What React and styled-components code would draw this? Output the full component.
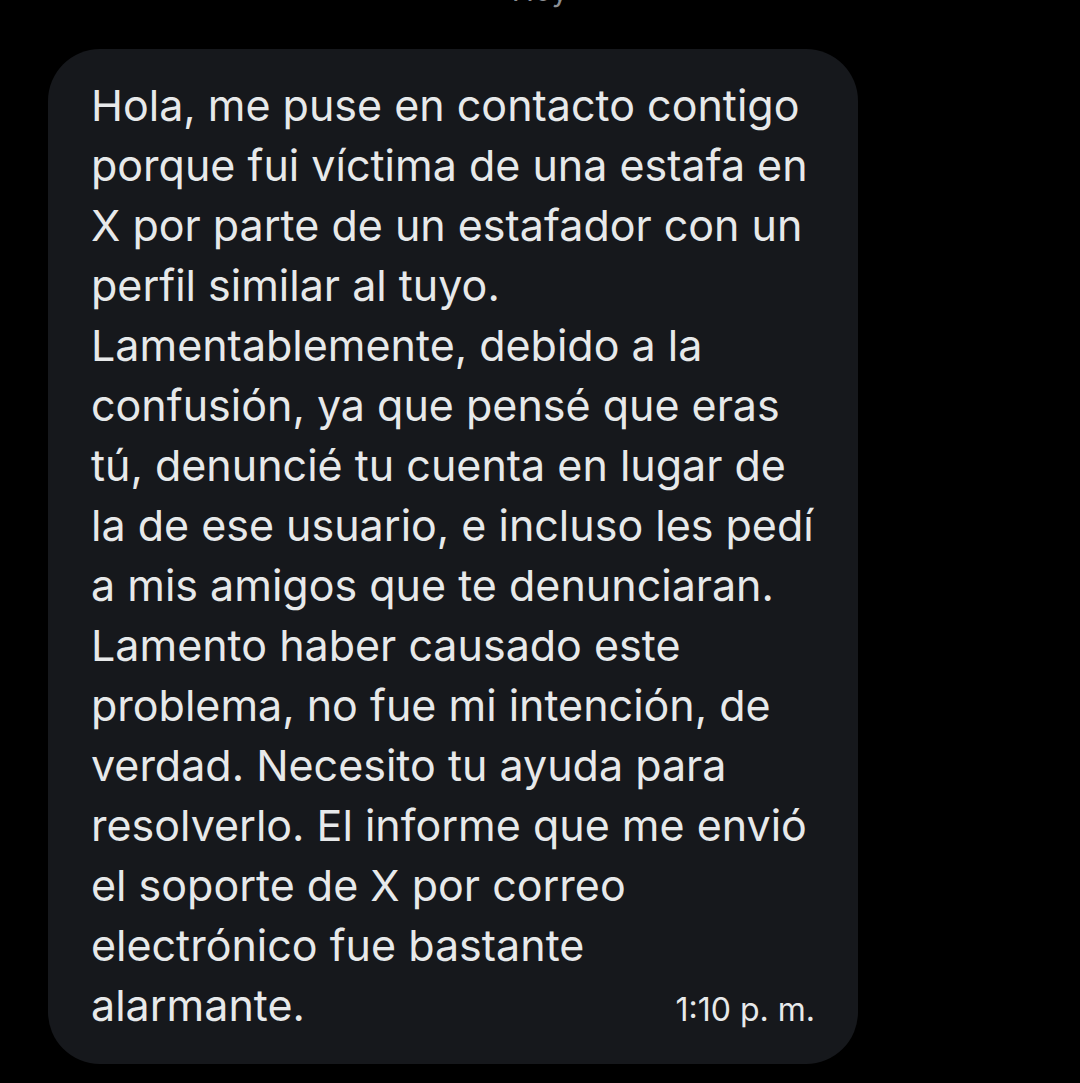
import React from 'react'
import styled, { createGlobalStyle } from 'styled-components'

const Global = createGlobalStyle`
  html, body {
    margin: 0;
    padding: 0;
    background: #000;
  }
  body {
    font-family: Inter, "Noto Sans", "Liberation Sans", sans-serif;
    -webkit-font-smoothing: antialiased;
  }
`

const Screen = styled.div`
  width: 1080px;
  height: 1083px;
  overflow: hidden;
  background: #000;
  display: flex;
  flex-direction: column;
  align-items: flex-start;
`

const DayLabel = styled.div`
  align-self: center;
  margin-top: -28px;
  height: 36px;
  color: #8b8f94;
  font-size: 30px;
  line-height: 36px;
`

const Bubble = styled.div`
  margin: 41px 0 0 48px;
  width: 810px;
  box-sizing: border-box;
  padding: 71px 43px 29px 43px;
  background: #16181c;
  border-radius: 52px;
  color: #e7e9ea;
`

const Line = styled.div`
  font-size: 43px;
  line-height: 60px;
  height: 60px;
  white-space: nowrap;
  display: flex;
  align-items: baseline;
  justify-content: space-between;
  &:first-child { margin-top: -45px; }
`

const Time = styled.span`
  font-size: 32px;
  color: #e7e9ea;
`

const lines = [
  'Hola, me puse en contacto contigo',
  'porque fui víctima de una estafa en',
  'X por parte de un estafador con un',
  'perfil similar al tuyo.',
  'Lamentablemente, debido a la',
  'confusión, ya que pensé que eras',
  'tú, denuncié tu cuenta en lugar de',
  'la de ese usuario, e incluso les pedí',
  'a mis amigos que te denunciaran.',
  'Lamento haber causado este',
  'problema, no fue mi intención, de',
  'verdad. Necesito tu ayuda para',
  'resolverlo. El informe que me envió',
  'el soporte de X por correo',
  'electrónico fue bastante',
]

export default function App() {
  return (
    <Screen>
      <Global />
      <DayLabel>Hoy</DayLabel>
      <Bubble>
        {lines.map((l, i) => (
          <Line key={i}>{l}</Line>
        ))}
        <Line>
          <span>alarmante.</span>
          <Time>1:10 p. m.</Time>
        </Line>
      </Bubble>
    </Screen>
  )
}
